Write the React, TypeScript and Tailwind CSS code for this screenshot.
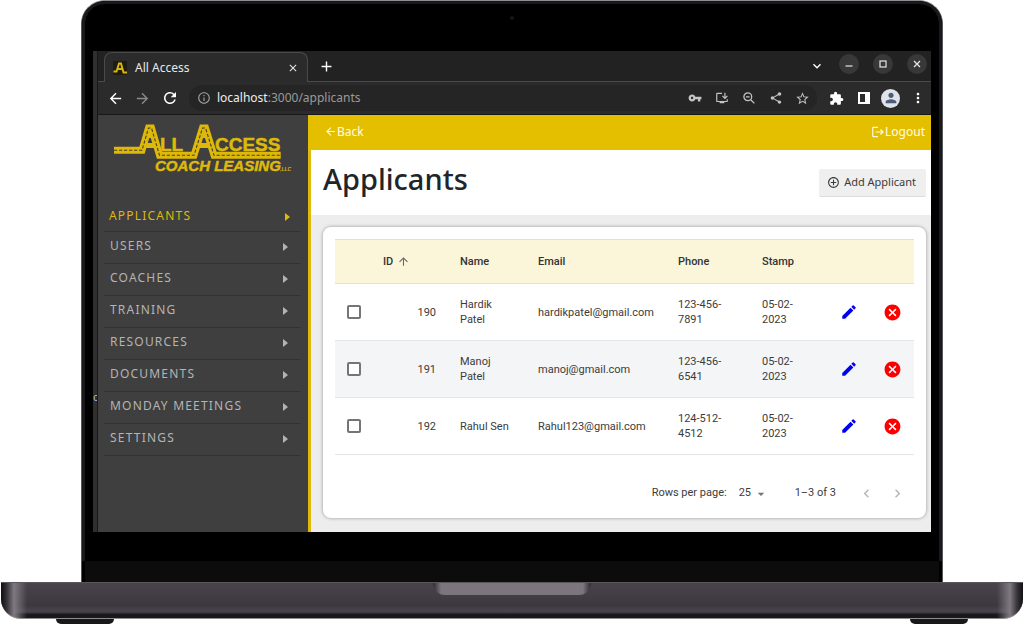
import type { ReactNode } from "react";
import {
  MdAddCircleOutline,
  MdArrowBack,
  MdArrowDropDown,
  MdArrowForward,
  MdArrowUpward,
  MdCancel,
  MdChevronLeft,
  MdChevronRight,
  MdClose,
  MdEdit,
  MdExpandMore,
  MdExtension,
  MdInfoOutline,
  MdInstallDesktop,
  MdLogout,
  MdMoreVert,
  MdAdd,
  MdPerson,
  MdRefresh,
  MdShare,
  MdStarOutline,
  MdVpnKey,
} from "react-icons/md";

const applicants = [
  { id: 190, name: "Hardik Patel", email: "hardikpatel@gmail.com", phone: "123-456-7891", stamp: "05-02-2023" },
  { id: 191, name: "Manoj Patel", email: "manoj@gmail.com", phone: "123-456-6541", stamp: "05-02-2023" },
  { id: 192, name: "Rahul Sen", email: "Rahul123@gmail.com", phone: "124-512-4512", stamp: "05-02-2023" },
];

const menu = ["Users", "Coaches", "Training", "Resources", "Documents", "Monday Meetings", "Settings"];

function IconButton({ label, children, className = "" }: { label: string; children: ReactNode; className?: string }) {
  return (
    <button type="button" aria-label={label} className={`flex w-[27px] shrink-0 items-center justify-center ${className}`}>
      {children}
    </button>
  );
}

function WindowButton({ label, children }: { label: string; children: ReactNode }) {
  return (
    <button type="button" aria-label={label} className="flex size-5 items-center justify-center rounded-full bg-[#383838] text-[#e6e6e6]">
      {children}
    </button>
  );
}

function Favicon() {
  return (
    <svg viewBox="0 0 14 14" className="size-3.5 shrink-0" aria-hidden="true">
      <rect width="14" height="14" fill="#1f1d12" />
      <path d="M0.5 10.5H3.5L6 2.5H8L10.5 11.5H14M4.5 8H9.5" fill="none" stroke="#d9b70c" strokeWidth="1.9" />
    </svg>
  );
}

function TabStrip() {
  return (
    <div className="flex h-[31px] border-b border-[#4a4a4a] bg-[#222222]">
      <div className="ml-1.5 mt-px flex h-[30px] w-[204px] items-center rounded-t-lg border border-b-0 border-[#4a4a4a] bg-[#2b2b2b] px-2">
        <Favicon />
        <span className="ml-2 flex-1 text-[12px] text-[#e8e8e8]">All Access</span>
        <button type="button" aria-label="Close tab" className="text-[#e8e8e8]">
          <MdClose size={12} />
        </button>
      </div>
      <button type="button" aria-label="New tab" className="ml-2.5 text-white">
        <MdAdd size={17} />
      </button>
      <div className="ml-auto flex items-center gap-3.5 pb-1 pr-1">
        <button type="button" aria-label="Search tabs" className="pt-1 text-white">
          <MdExpandMore size={16} />
        </button>
        <WindowButton label="Minimize">
          <svg viewBox="0 0 10 10" className="size-2.5"><path d="M1.5 7H8.5" stroke="currentColor" strokeWidth="1.2" /></svg>
        </WindowButton>
        <WindowButton label="Maximize">
          <svg viewBox="0 0 10 10" className="size-2.5"><rect x="2" y="2" width="6" height="6" fill="none" stroke="currentColor" strokeWidth="1.2" /></svg>
        </WindowButton>
        <WindowButton label="Close">
          <svg viewBox="0 0 10 10" className="size-2.5"><path d="M2 2L8 8M8 2L2 8" stroke="currentColor" strokeWidth="1.3" /></svg>
        </WindowButton>
      </div>
    </div>
  );
}

function Toolbar() {
  return (
    <div className="flex h-[33px] items-center border-b border-[#181818] bg-[#2b2b2b] pl-1 text-white">
      <IconButton label="Back"><MdArrowBack size={17} /></IconButton>
      <IconButton label="Forward" className="text-[#8a8a8a]"><MdArrowForward size={17} /></IconButton>
      <IconButton label="Reload"><MdRefresh size={18} /></IconButton>
      <div className="mx-1.5 flex h-[26px] min-w-0 flex-1 items-center rounded-full bg-[#252525] pl-2 pr-px text-[#c4c4c4]">
        <MdInfoOutline size={14} className="shrink-0 text-[#a0a0a0]" />
        <div className="ml-1.5 min-w-0 flex-1 truncate text-[12px] text-[#9a9a9a]">
          <span className="text-[#ededed]">localhost</span>:3000/applicants
        </div>
        <IconButton label="Passwords"><MdVpnKey size={14} /></IconButton>
        <IconButton label="Install"><MdInstallDesktop size={14} /></IconButton>
        <IconButton label="Zoom">
          <svg viewBox="0 0 12 12" className="size-3" fill="none" stroke="currentColor" strokeWidth="1.3">
            <circle cx="4.8" cy="4.8" r="3.9" />
            <path d="M7.7 7.7L11.4 11.4M3 4.8H6.6" />
          </svg>
        </IconButton>
        <IconButton label="Share"><MdShare size={14} /></IconButton>
        <IconButton label="Bookmark"><MdStarOutline size={15} /></IconButton>
      </div>
      <IconButton label="Extensions"><MdExtension size={15} /></IconButton>
      <IconButton label="Side panel">
        <svg viewBox="0 0 12 12" className="size-3"><path d="M0 0H12V12H0ZM2 2V10H7V2Z" fill="currentColor" fillRule="evenodd" /></svg>
      </IconButton>
      <IconButton label="Profile">
        <span className="flex size-[19px] items-center justify-center rounded-full bg-[#dfe3ea] text-[#4d5d78]">
          <MdPerson size={16} />
        </span>
      </IconButton>
      <IconButton label="Menu"><MdMoreVert size={16} /></IconButton>
    </div>
  );
}

function Logo() {
  const road = "M2 27.3H30L36.5 5H39.5L47.5 32.3H82L90.5 5H93.5L102 32.3H168.7";
  return (
    <svg viewBox="0 0 182 52" className="h-[52px] w-[182px]" role="img" aria-label="All Access Coach Leasing, LLC">
      <path d={road} fill="none" stroke="#dfb90a" strokeWidth="7" />
      <path d="M32 22.5H45M85 22.5H100" stroke="#dfb90a" strokeWidth="5" />
      <path d="M38 9V15M92 9V15" stroke="#dfb90a" strokeWidth="4" />
      <path d={road} fill="none" stroke="#4a4220" strokeWidth="1.1" strokeDasharray="3.2 1.8" />
      <g fill="#dfb90a" stroke="#dfb90a" strokeWidth="0.5" fontFamily="'Liberation Sans', Arial, sans-serif" fontWeight="700">
        <text x="48" y="27.5" fontSize="19">LL</text>
        <text x="103" y="27.5" fontSize="19">CCESS</text>
        <text x="43" y="48" fontSize="15" fontStyle="italic">COACH LEASING</text>
        <text x="168" y="48" fontSize="5" strokeWidth="0" fontStyle="italic">,LLC</text>
      </g>
    </svg>
  );
}

function Caret() {
  return (
    <svg viewBox="0 0 5 8" className="mt-0.5 h-2 w-[5px]" aria-hidden="true">
      <path d="M0 0L5 4L0 8Z" fill="currentColor" />
    </svg>
  );
}

function Sidebar() {
  return (
    <aside className="w-[210px] shrink-0 bg-[#3f3f3f] pl-1.5 pr-2">
      <div className="pl-2 pt-2">
        <Logo />
      </div>
      <nav className="mt-[25px] text-[12px] uppercase tracking-widest text-[#b4b4b4]">
        <a href="#applicants" className="flex h-8 items-center justify-between border-b border-[#323232] pl-[5px] pr-2.5 text-[#dfb90a]">
          Applicants
          <Caret />
        </a>
        {menu.map((item) => (
          <a key={item} href={"#" + item.toLowerCase().replace(" ", "-")} className="flex h-8 items-center justify-between border-b border-[#323232] pb-1 pl-1.5 pr-3">
            {item}
            <Caret />
          </a>
        ))}
      </nav>
    </aside>
  );
}

function ApplicantsTable() {
  return (
    <table className="w-full table-fixed border-collapse text-left text-[11px] leading-[15px] text-[#3c3c3c]">
      <colgroup>
        <col className="w-[38px]" />
        <col className="w-[75px]" />
        <col className="w-[78px]" />
        <col />
        <col className="w-[84px]" />
        <col className="w-[77px]" />
        <col className="w-[44px]" />
        <col className="w-[43px]" />
      </colgroup>
      <thead>
        <tr className="h-11 border-y border-[#e0e0e0] bg-[#fbf5da] text-[#333333]">
          <th />
          <th className="pl-2.5 font-medium" aria-sort="ascending">
            <button type="button" className="flex items-center gap-1">
              ID <MdArrowUpward size={13} className="text-[#666666]" />
            </button>
          </th>
          <th className="px-3 font-medium">Name</th>
          <th className="px-3 font-medium">Email</th>
          <th className="px-3 font-medium">Phone</th>
          <th className="px-3 font-medium">Stamp</th>
          <th />
          <th />
        </tr>
      </thead>
      <tbody>
        {applicants.map((row) => (
          <tr key={row.id} className="h-[57px] border-b border-[#e4e5e7] even:bg-[#f4f5f7]">
            <td>
              <input
                type="checkbox"
                aria-label={"Select " + row.name}
                className="mx-auto block size-3.5 appearance-none rounded-xs border-2 border-[#757575] bg-white"
              />
            </td>
            <td className="px-3 text-right">{row.id}</td>
            <td className="pl-3 pr-4">{row.name}</td>
            <td className="px-3">{row.email}</td>
            <td className="px-3">{row.phone}</td>
            <td className="px-3">{row.stamp}</td>
            <td>
              <button type="button" aria-label={"Edit " + row.name} className="mx-auto block text-[#0000f0]">
                <MdEdit size={18} />
              </button>
            </td>
            <td>
              <button type="button" aria-label={"Delete " + row.name} className="mx-auto block text-[#fa0000]">
                <MdCancel size={19} />
              </button>
            </td>
          </tr>
        ))}
      </tbody>
    </table>
  );
}

function Pagination() {
  return (
    <div className="flex h-[63px] items-center justify-end pr-2 pt-3.5 text-[11px] text-[#3c3c3c]">
      <label htmlFor="rows-per-page">Rows per page:</label>
      <div className="ml-3 flex items-center">
        <select id="rows-per-page" defaultValue="25" className="w-3.5 appearance-none bg-transparent">
          <option value="25">25</option>
        </select>
        <MdArrowDropDown size={16} className="text-[#757575]" />
      </div>
      <span className="ml-[26px]">1–3 of 3</span>
      <div className="ml-[22px] flex gap-3.5 text-[#b5b5b5]">
        <button type="button" aria-label="Previous page" disabled><MdChevronLeft size={17} /></button>
        <button type="button" aria-label="Next page" disabled><MdChevronRight size={17} /></button>
      </div>
    </div>
  );
}

function Content() {
  return (
    <main className="flex min-w-0 flex-1 flex-col border-l-[3px] border-[#e0b90f] bg-[#ededed]">
      <div className="-ml-[3px] flex h-[35px] items-center justify-between bg-[#e4bf00] pb-0.5 pl-4 pr-1.5 text-[12px] text-[#fffbe6]">
        <a href="#back" className="flex items-center"><MdArrowBack size={13} />Back</a>
        <a href="#logout" className="flex items-center"><MdLogout size={14} />Logout</a>
      </div>
      <header className="flex h-[65px] items-center justify-between bg-white pl-3 pr-[5px]">
        <h1 className="pb-2 text-[29px] font-medium leading-9 text-[#212529]">Applicants</h1>
        <button type="button" className="flex h-7 items-center gap-1 rounded-xs border-b border-[#dcdcdc] bg-[#efefef] pl-2 pr-2.5 text-[11px] text-[#3c3c3c]">
          <MdAddCircleOutline size={13} />
          Add Applicant
        </button>
      </header>
      <section className="mb-3.5 ml-3 mr-[5px] mt-3 rounded-lg bg-white px-3 pt-3 font-['Roboto',sans-serif] shadow-[0_0_3px_1px_#b8b8b8]">
        <ApplicantsTable />
        <Pagination />
      </section>
    </main>
  );
}

function Laptop({ children }: { children: ReactNode }) {
  return (
    <div className="overflow-hidden bg-white">
      <div className="px-[81px]">
        <div className="rounded-t-[24px] border-x border-t border-[#55565a] border-t-[#8b8f92] bg-black">
          <div className="rounded-t-[23px] border-x-[3px] border-t-[3px] border-[#19191b] px-2">
            <div className="flex h-[47px] justify-center pt-3">
              <span className="size-1 rounded-full bg-[#15151c]" />
            </div>
            {children}
            <div className="h-[29px]" />
          </div>
          <div className="mx-[3px] h-[21px] bg-[#0c0c0c]" />
        </div>
      </div>
      <div className="mx-px flex h-[37px] justify-center rounded-b-[20px] border-b border-t border-b-[#8d8d8f] border-t-[#5a565c] bg-[linear-gradient(90deg,#0f0e10_0,#39353b_6px,#7f7982_13px,#7f798200_26px,#7f798200_calc(100%_-_26px),#7f7982_calc(100%_-_13px),#39353b_calc(100%_-_6px),#0f0e10_100%),linear-gradient(180deg,#49434b_0,#3d373f_65%,#4a444c_80%,#3a353c_86%,#19191b_89%,#19191b_100%)]">
        <div className="h-3 w-[158px] rounded-b-xl bg-[linear-gradient(90deg,#2e2a30_0,#7c757e_8px,#7c757e_calc(100%_-_8px),#2e2a30_100%)]" />
      </div>
      <div className="flex justify-between px-14">
        <div className="h-[5px] w-[58px] rounded-b-lg bg-[#18181a]" />
        <div className="h-[5px] w-[58px] rounded-b-lg bg-[#18181a]" />
      </div>
    </div>
  );
}

export default function App() {
  return (
    <div className="font-['Noto_Sans',sans-serif]">
      <Laptop>
        <div className="flex bg-[#2b2b2b]">
          <div className="flex w-[5px] items-center overflow-hidden border-r border-[#181818] bg-[#303030] pt-[210px] text-[11px] leading-4 text-[#b4b4b4]">
            c
          </div>
          <div className="min-w-0 flex-1">
            <TabStrip />
            <Toolbar />
            <div className="flex">
              <Sidebar />
              <Content />
            </div>
          </div>
        </div>
      </Laptop>
    </div>
  );
}
